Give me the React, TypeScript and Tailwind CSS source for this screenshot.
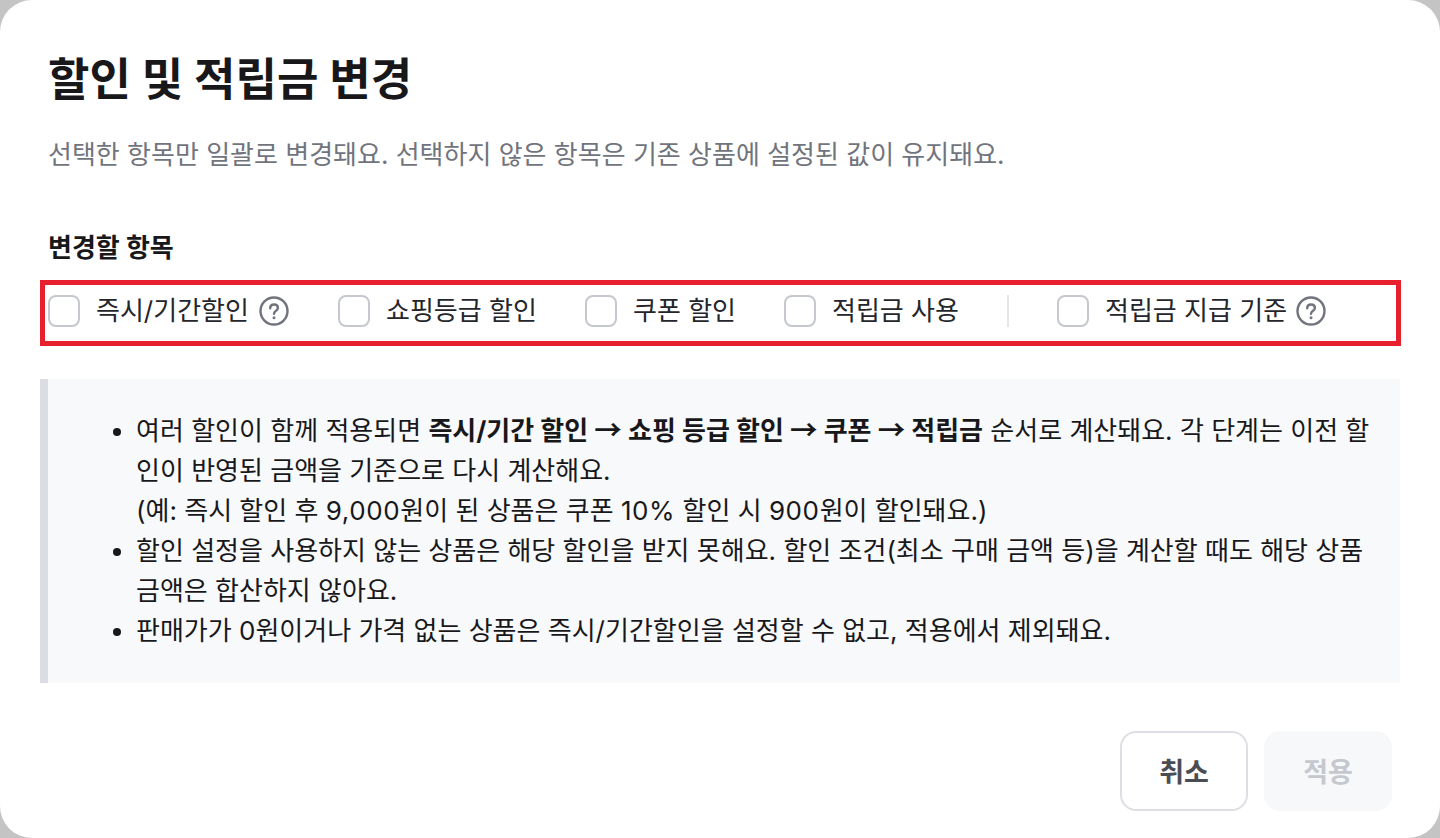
import React from "react";

const font = "font-['Inter','Noto_Sans_CJK_KR',sans-serif]";

function Help() {
  return (
    <svg width="30" height="30" viewBox="0 0 30 30" fill="none" className="shrink-0">
      <circle cx="15" cy="15" r="13.5" stroke="#71747d" strokeWidth="2.4" />
      <path d="M11.2 12.2c0-2.3 1.7-3.7 3.9-3.7s3.8 1.4 3.8 3.4c0 2.9-3.9 2.8-3.9 5.8" stroke="#71747d" strokeWidth="2.4" strokeLinecap="round" />
      <circle cx="15" cy="21.8" r="1.5" fill="#71747d" />
    </svg>
  );
}

function Check({ label, help, gap = "ml-[10px]", className = "" }: { label: string; help?: boolean; gap?: string; className?: string }) {
  return (
    <label className={`flex items-center ${className}`}>
      <span className="w-8 h-8 rounded-lg border-2 border-[#c5c8ce] bg-white shrink-0" />
      <span className="ml-4 text-[26px] leading-[40px] text-[#25262b] whitespace-nowrap">{label}</span>
      {help && <span className={gap}><Help /></span>}
    </label>
  );
}

function Arrow() {
  return <span className="font-['Noto_Sans_CJK_KR',sans-serif] text-[27.5px] leading-none">→</span>;
}

function Num({ children }: { children: React.ReactNode }) {
  return <span className="tracking-[0.6px]">{children}</span>;
}

export default function App() {
  return (
    <div className={`w-[1440px] h-[838px] bg-[#c4c4c4] overflow-hidden ${font}`}>
      <div className="w-full h-full bg-white rounded-[32px] pt-[50px] px-[48px] flex flex-col">
        <h1 className="text-[45px] leading-[60px] font-bold text-[#18181b] tracking-[0.1px]">할인 및 적립금 변경</h1>
        <p className="mt-[25px] text-[26px] leading-[40px] text-[#71747d]">선택한 항목만 일괄로 변경돼요. 선택하지 않은 항목은 기존 상품에 설정된 값이 유지돼요.</p>
        <h2 className="mt-[55px] text-[26px] leading-[36px] font-bold text-[#18181b]">변경할 항목</h2>
        <div className="-ml-2 -mr-[9px] mt-[14px] h-[66px] border-[5px] border-[#e8202e] flex items-center pl-[3px] pb-1">
          <Check label="즉시/기간할인" help className="w-[290px]" />
          <Check label="쇼핑등급 할인" className="w-[247px]" />
          <Check label="쿠폰 할인" className="w-[199px]" />
          <Check label="적립금 사용" className="w-[223px]" />
          <span className="w-0.5 h-8 bg-[#e4e5e9] mr-12" />
          <Check label="적립금 지급 기준" help gap="ml-[9px]" />
        </div>
        <div className="-mx-2 mt-[33px] h-[304px] bg-[#f8f9fb] border-l-8 border-[#dcdde3] pl-[40px] pr-[30px] py-[32px] text-[26px] leading-[40px] text-[#18181b]">
          <ul className="list-disc pl-12">
            <li>여러 할인이 함께 적용되면 <b>즉시/기간 할인 <Arrow /> 쇼핑 등급 할인 <Arrow /> 쿠폰 <Arrow /> 적립금</b> 순서로 계산돼요. 각 단계는 이전 할인이 반영된 금액을 기준으로 다시 계산해요.<br />(예: 즉시 할인 후 <Num>9,000</Num>원이 된 상품은 쿠폰 <Num>10%</Num> 할인 시 <Num>900</Num>원이 할인돼요.)</li>
            <li>할인 설정을 사용하지 않는 상품은 해당 할인을 받지 못해요. 할인 조건(최소 구매 금액 등)을 계산할 때도 해당 상품 금액은 합산하지 않아요.</li>
            <li>판매가가 0원이거나 가격 없는 상품은 즉시/기간할인을 설정할 수 없고, 적용에서 제외돼요.</li>
          </ul>
        </div>
        <div className="mt-auto mb-[27px] flex justify-end gap-4">
          <button className="w-32 h-20 pt-1 rounded-2xl border-2 border-[#dedfe5] bg-white text-[27px] font-bold text-[#4b4d55]">취소</button>
          <button className="w-32 h-20 pt-1 rounded-2xl bg-[#f7f8f9] text-[27px] font-bold text-[#c5c8ce]">적용</button>
        </div>
      </div>
    </div>
  );
}
